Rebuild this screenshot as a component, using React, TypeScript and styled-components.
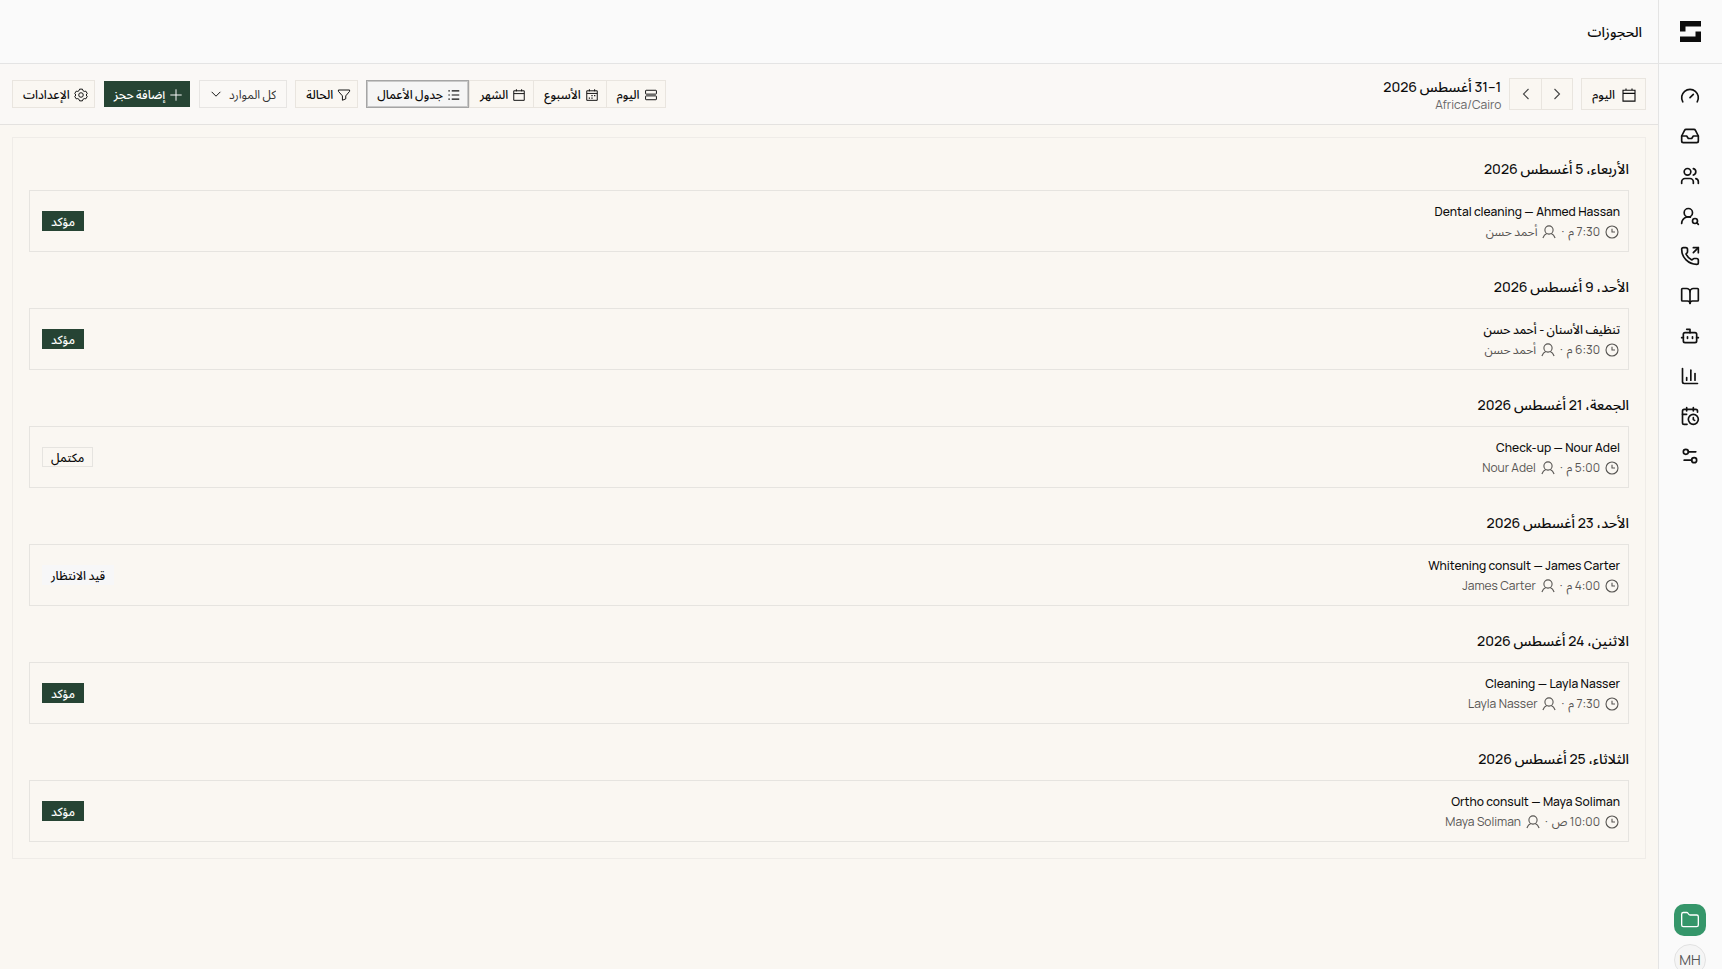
import React from 'react';
import styled, { createGlobalStyle, css } from 'styled-components';
import {
  Bot, BookOpen, CalendarClock, ChartColumn, Folder, Gauge, Inbox,
  PhoneOutgoing, Settings2, UserRoundSearch, Users,
} from 'lucide-react';

const Global = createGlobalStyle`
  *, *::before, *::after { box-sizing: border-box; }
  body {
    margin: 0;
    background: #faf7f2;
    color: #0c0c0c;
    font-family: Manrope, "Noto Sans Arabic", Inter, "Noto Sans", sans-serif;
    font-size: 14px;
    line-height: 20px;
  }
  button, select { font: inherit; color: inherit; cursor: pointer; }
  h1, h2, h3, p, ul { margin: 0; padding: 0; font-size: inherit; font-weight: inherit; }
  ul { list-style: none; }
`;

const Shell = styled.div`
  display: flex;
  height: 100vh;
  overflow: hidden;
`;

const Sidebar = styled.aside`
  display: flex;
  flex-direction: column;
  flex: 0 0 64px;
  height: calc(100vh + 7px);
  background: #fafafa;
  border-left: 1px solid #e4e4e4;
  > * { padding-right: 1px; }
`;

const LogoLink = styled.a`
  display: grid;
  place-items: center;
  height: 64px;
  flex: none;
  border-bottom: 1px solid #e4e4e4;
  color: #0c0c0c;
`;

const Nav = styled.nav`
  display: flex;
  flex-direction: column;
  align-items: center;
  flex: 1;
  padding-top: 12px;
`;

const NavLink = styled.a`
  display: grid;
  place-items: center;
  width: 40px;
  height: 40px;
  color: #111;
`;

const SidebarFooter = styled.div`
  display: flex;
  flex-direction: column;
  align-items: center;
  gap: 8px;
`;

const FilesButton = styled.button`
  display: grid;
  place-items: center;
  width: 32px;
  height: 32px;
  padding: 0;
  border: 0;
  border-radius: 10px;
  background: #35966a;
  color: #fff;
`;

const Avatar = styled.button`
  width: 32px;
  height: 32px;
  padding: 0;
  border: 1px solid #e2e2e2;
  border-radius: 50%;
  background: #f5f5f5;
  color: #555;
  font-size: 14px;
`;

const Main = styled.main`
  display: flex;
  flex-direction: column;
  flex: 1;
  min-width: 0;
`;

const Header = styled.header`
  display: flex;
  align-items: center;
  height: 64px;
  flex: none;
  padding: 0 16px;
  background: #fafafa;
  border-bottom: 1px solid #e4e4e4;
  font-weight: 500;
`;

const Toolbar = styled.div`
  display: flex;
  align-items: center;
  justify-content: space-between;
  flex: none;
  height: 61px;
  padding: 0 12px;
  background: #faf8f6;
  border-bottom: 1px solid #e4e2e0;
`;

const Cluster = styled.div`
  display: flex;
  align-items: center;
  gap: 8px;
`;

const Joined = styled.div`
  display: flex;
  align-items: center;
`;

const outlined = css`
  border: 1px solid #e9e5df;
  background: #faf7f2;
`;

const Button = styled.button<{ $large?: boolean; $joined?: boolean; $active?: boolean; $primary?: boolean }>`
  display: flex;
  align-items: center;
  gap: ${p => (p.$large ? 6 : 4)}px;
  height: ${p => (p.$large ? 32 : 28)}px;
  padding: 1px ${p => (p.$large ? 8 : p.$joined || p.$primary ? 7 : 6)}px 0 10px;
  font-size: 12px;
  font-weight: 500;
  line-height: 20px;
  white-space: nowrap;
  ${outlined}
  ${p => p.$joined && css`&:not(:first-child) { border-right: 0; }`}
  ${p => p.$active && css`
    background: #f5f5f5;
    &&& { border: 1px solid #a5a5a5; }
    outline: 1px solid #c9c9c9;
    outline-offset: -2px;
  `}
  ${p => p.$primary && css`
    background: #264434;
    background-clip: padding-box;
    border-color: transparent;
    color: #fff;
  `}
`;

const StepButton = styled.button`
  display: grid;
  place-items: center;
  width: 32px;
  height: 32px;
  padding: 0;
  color: #444;
  ${outlined}
  & + & { border-right: 0; }
`;

const Period = styled.div`
  display: flex;
  flex-direction: column;
  padding-top: 2px;
`;

const PeriodTitle = styled.h2`
  line-height: 20px;
  font-weight: 500;
`;

const PeriodZone = styled.p`
  font-size: 12px;
  line-height: 16px;
  color: #666;
`;

const SelectBox = styled.label`
  display: grid;
  align-items: center;
  > * { grid-area: 1 / 1; }
  > svg { justify-self: end; margin-left: 10px; pointer-events: none; }
`;

const Select = styled.select`
  appearance: none;
  width: 88px;
  height: 28px;
  padding: 1px 10px 0 24px;
  border: 1px solid #e7e5e3;
  border-radius: 0;
  background: transparent;
  color: #333;
  font-size: 12px;
`;

const Content = styled.div`
  padding: 12px;
`;

const Agenda = styled.section`
  display: flex;
  flex-direction: column;
  gap: 20px;
  padding: 16px;
  border: 1px solid #efece8;
`;

const DayTitle = styled.h3`
  padding: 5px 0 11px;
  font-weight: 500;
`;

const Booking = styled.article`
  display: flex;
  align-items: center;
  justify-content: space-between;
  height: 62px;
  padding: 0 8px 0 12px;
  border: 1px solid #e6e4e0;
`;

const BookingText = styled.div`
  padding-top: 2px;
`;

const BookingTitle = styled.h4`
  margin: 0;
  font-size: 12px;
  font-weight: 500;
  line-height: 20px;
`;

const Meta = styled.p`
  display: flex;
  align-items: center;
  gap: 4px;
  font-size: 12px;
  line-height: 20px;
  color: #575552;
`;

type Status = 'confirmed' | 'completed' | 'pending';

const badgeLook = {
  confirmed: css`background: #264434; border-color: #264434; color: #fff;`,
  completed: css`border-color: #e6e4e0;`,
  pending: css`background: #f7f7f8; border-color: #f7f7f8;`,
};

const Badge = styled.span<{ $status: Status }>`
  height: 20px;
  padding: 0 8px;
  border: 1px solid;
  font-size: 12px;
  font-weight: 500;
  line-height: 20px;
  ${p => badgeLook[p.$status]}
`;

const Glyph = ({ size = 14, children }: { size?: number; children: React.ReactNode }) => (
  <svg width={size} height={size} viewBox="0 0 16 16" fill="none" stroke="currentColor" strokeWidth="1.1" aria-hidden="true">
    {children}
  </svg>
);

const CalendarGlyph = ({ size }: { size?: number }) => (
  <Glyph size={size}><path d="M2 3.2h12v10.9H2zM2 6.4h12M5 1.4v2.400M11 1.4v2.400" /></Glyph>
);
const WeekGlyph = () => (
  <Glyph>
    <path d="M2 3.2h12v10.9H2zM2 6.2h12M5 1.4v2.400M11 1.4v2.400" />
    <path d="M10.4 8.7h1.4M7.3 8.7h1.4M4.3 11.6h1.4M7.3 11.6h1.4" strokeWidth="1.4" />
  </Glyph>
);
const RowsGlyph = () => (
  <Glyph><rect x="1.8" y="2.6" width="12.4" height="4.4" rx=".6" /><rect x="1.8" y="9" width="12.4" height="4.4" rx=".6" /></Glyph>
);
const ListGlyph = () => (
  <Glyph><path d="M5.4 3.3H14M5.4 8H14M5.4 12.7H14M1.6 3.3h1.6M1.6 8h1.6M1.6 12.7h1.6" strokeWidth="1.3" /></Glyph>
);
const FilterGlyph = () => (
  <Glyph><path d="M1.6 2.3h12.8v1.5L10 9v3.4L6.2 14V9L1.6 3.8z" strokeLinejoin="round" /></Glyph>
);
const PlusGlyph = () => <Glyph><path d="M8 1.500v13M1.500 8h13" /></Glyph>;
const GearGlyph = () => (
  <Glyph>
    <path d="M6.400 1.300h3.200l.6 1.700 1.500.9 1.800-.3 1.600 2.700L13.900 8l1.200 1.700-1.600 2.700-1.800-.3-1.500.9-.6 1.700H6.400L5.800 13l-1.500-.9-1.800.3L.9 9.700 2.100 8 .9 6.300l1.600-2.700 1.800.3L5.800 3z" strokeLinejoin="round" />
    <circle cx="8" cy="8" r="2.600" />
  </Glyph>
);
const ClockGlyph = () => (
  <Glyph size={16}><circle cx="8" cy="8" r="6" /><path d="M8 4.700V8h3" /></Glyph>
);
const PersonGlyph = () => (
  <Glyph size={16}><circle cx="8" cy="6" r="4.100" /><path d="M1.900 14c.8-2.200 2-3.700 3.900-4.500M14.100 14c-.8-2.200-2-3.700-3.900-4.500" /></Glyph>
);
const Chevron = ({ d, size = 16 }: { d: string; size?: number }) => <Glyph size={size}><path d={d} /></Glyph>;

const navItems = [
  { label: 'لوحة التحكم', Icon: Gauge },
  { label: 'الوارد', Icon: Inbox },
  { label: 'جهات الاتصال', Icon: Users },
  { label: 'العملاء المحتملون', Icon: UserRoundSearch },
  { label: 'المكالمات', Icon: PhoneOutgoing },
  { label: 'المعرفة', Icon: BookOpen },
  { label: 'المساعد', Icon: Bot },
  { label: 'التقارير', Icon: ChartColumn },
  { label: 'الحجوزات', Icon: CalendarClock },
  { label: 'التفضيلات', Icon: Settings2 },
];

const statusText: Record<Status, string> = {
  confirmed: 'مؤكد',
  completed: 'مكتمل',
  pending: 'قيد الانتظار',
};

const days: { date: string; title: string; time: string; person: string; status: Status }[] = [
  { date: 'الأربعاء، 5 أغسطس 2026', title: 'Dental cleaning — Ahmed Hassan', time: '7:30 م', person: 'أحمد حسن', status: 'confirmed' },
  { date: 'الأحد، 9 أغسطس 2026', title: 'تنظيف الأسنان - أحمد حسن', time: '6:30 م', person: 'أحمد حسن', status: 'confirmed' },
  { date: 'الجمعة، 21 أغسطس 2026', title: 'Check-up — Nour Adel', time: '5:00 م', person: 'Nour Adel', status: 'completed' },
  { date: 'الأحد، 23 أغسطس 2026', title: 'Whitening consult — James Carter', time: '4:00 م', person: 'James Carter', status: 'pending' },
  { date: 'الاثنين، 24 أغسطس 2026', title: 'Cleaning — Layla Nasser', time: '7:30 م', person: 'Layla Nasser', status: 'confirmed' },
  { date: 'الثلاثاء، 25 أغسطس 2026', title: 'Ortho consult — Maya Soliman', time: '10:00 ص', person: 'Maya Soliman', status: 'confirmed' },
];

export default function App() {
  return (
    <Shell dir="rtl" lang="ar">
      <Global />
      <Sidebar>
        <LogoLink href="#" aria-label="الرئيسية">
          <svg width="21" height="21" viewBox="0 0 21 21" fill="currentColor" aria-hidden="true">
            <path d="M0 0h21v5.500H5.500v5L0 10.500zM21 21H0v-5.500h15.500v-5L21 10.500z" />
          </svg>
        </LogoLink>
        <Nav>
          {navItems.map(({ label, Icon }) => (
            <NavLink key={label} href="#" aria-label={label}><Icon size={20} /></NavLink>
          ))}
        </Nav>
        <SidebarFooter>
          <FilesButton aria-label="الملفات"><Folder size={20} strokeWidth={1.6} /></FilesButton>
          <Avatar>MH</Avatar>
        </SidebarFooter>
      </Sidebar>

      <Main>
        <Header><h1>الحجوزات</h1></Header>

        <Toolbar>
          <Cluster>
            <Button $large><CalendarGlyph size={16} />اليوم</Button>
            <Joined>
              <StepButton aria-label="السابق"><Chevron d="M5.500 3 10.500 8l-5 5" /></StepButton>
              <StepButton aria-label="التالي"><Chevron d="M10.500 3 5.500 8l5 5" /></StepButton>
            </Joined>
            <Period>
              <PeriodTitle>1–31 أغسطس 2026</PeriodTitle>
              <PeriodZone>Africa/Cairo</PeriodZone>
            </Period>
          </Cluster>

          <Cluster>
            <Joined>
              <Button $joined><RowsGlyph />اليوم</Button>
              <Button $joined><WeekGlyph />الأسبوع</Button>
              <Button $joined><CalendarGlyph />الشهر</Button>
              <Button $joined $active aria-pressed="true"><ListGlyph />جدول الأعمال</Button>
            </Joined>
            <Button><FilterGlyph />الحالة</Button>
            <SelectBox>
              <Select aria-label="الموارد" defaultValue="all">
                <option value="all">كل الموارد</option>
              </Select>
              <Chevron d="M3 5.500 8 10.500l5-5" size={14} />
            </SelectBox>
            <Button $primary><PlusGlyph />إضافة حجز</Button>
            <Button><GearGlyph />الإعدادات</Button>
          </Cluster>
        </Toolbar>

        <Content>
          <Agenda>
            {days.map(day => (
              <div key={day.date}>
                <DayTitle>{day.date}</DayTitle>
                <Booking>
                  <BookingText>
                    <BookingTitle>{day.title}</BookingTitle>
                    <Meta>
                      <ClockGlyph /><span>{day.time}</span><span>·</span><PersonGlyph /><span>{day.person}</span>
                    </Meta>
                  </BookingText>
                  <Badge $status={day.status}>{statusText[day.status]}</Badge>
                </Booking>
              </div>
            ))}
          </Agenda>
        </Content>
      </Main>
    </Shell>
  );
}
